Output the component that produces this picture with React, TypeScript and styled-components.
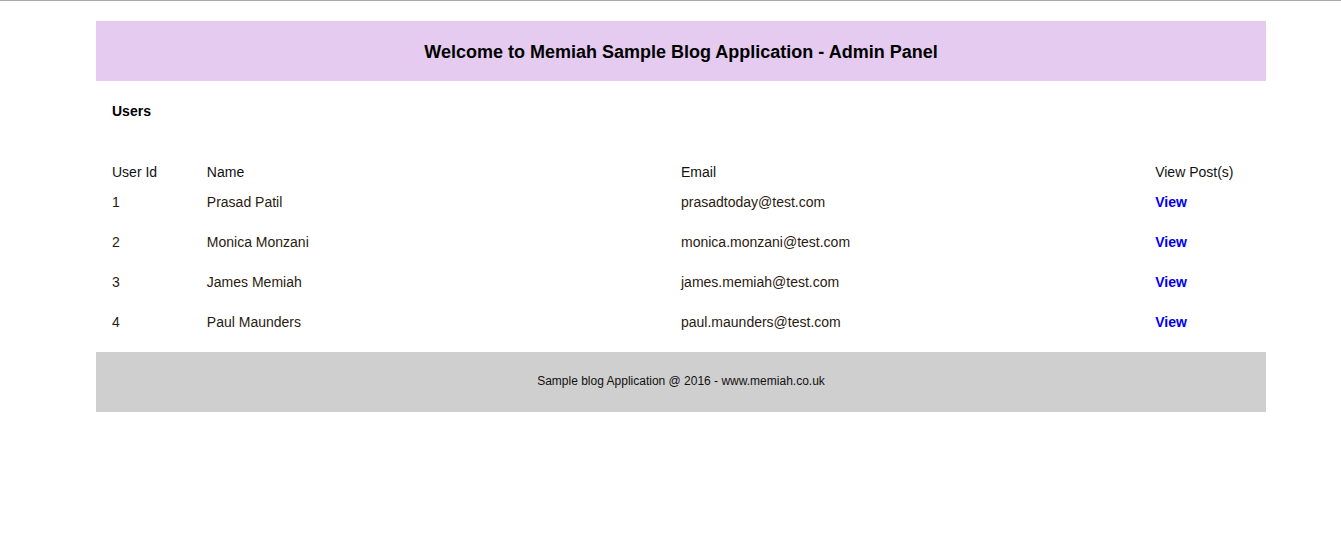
import styled, { createGlobalStyle } from "styled-components"

const users = [
    { id: 1, name: "Prasad Patil", email: "prasadtoday@test.com" },
    { id: 2, name: "Monica Monzani", email: "monica.monzani@test.com" },
    { id: 3, name: "James Memiah", email: "james.memiah@test.com" },
    { id: 4, name: "Paul Maunders", email: "paul.maunders@test.com" },
]

const App = () => {
    return (
        <>
            <GlobalStyle />
            <Page>
                <Container>
                    <Header>
                        <Title>Welcome to Memiah Sample Blog Application - Admin Panel</Title>
                    </Header>
                    <Content>
                        <SectionTitle>Users</SectionTitle>
                        <Table>
                            <HeadRow>
                                <Cell>User Id</Cell>
                                <Cell>Name</Cell>
                                <Cell>Email</Cell>
                                <Cell>View Post(s)</Cell>
                            </HeadRow>
                            {users.map((u) => (
                                <Row key={u.id}>
                                    <Cell>{u.id}</Cell>
                                    <Cell>{u.name}</Cell>
                                    <Cell>{u.email}</Cell>
                                    <Cell><ViewLink href="#">View</ViewLink></Cell>
                                </Row>
                            ))}
                        </Table>
                    </Content>
                    <Footer>Sample blog Application @ 2016 - www.memiah.co.uk</Footer>
                </Container>
            </Page>
        </>
    )
}

export default App

const GlobalStyle = createGlobalStyle`
body{
    margin: 0;
    background-color: #ffffff;
    font-family: "Liberation Sans", Arial, sans-serif;
    color: #222222;
}
`
const Page = styled.div`
width: 100%;
min-height: 548px;
border-top: 1px solid #a9a9a9;
box-sizing: border-box;
padding-top: 20px;
`
const Container = styled.div`
width: 1170px;
margin-left: 96px;
`
const Header = styled.div`
height: 60px;
box-sizing: border-box;
padding-top: 2px;
background-color: #e5cbf0;
display: flex;
justify-content: center;
align-items: center;
`
const Title = styled.h1`
margin: 0;
font-size: 18px;
font-weight: 700;
color: #000000;
`
const Content = styled.div`
padding: 20px 16px 0 16px;
`
const SectionTitle = styled.div`
font-size: 14px;
font-weight: 700;
line-height: 20px;
color: #000000;
margin-bottom: 41px;
`
const Table = styled.div`
display: flex;
flex-direction: column;
`
const HeadRow = styled.div`
display: grid;
grid-template-columns: 1fr 5fr 5fr 1fr;
font-size: 14px;
line-height: 20px;
padding-bottom: 10px;
color: #111111;
`
const Row = styled.div`
display: grid;
grid-template-columns: 1fr 5fr 5fr 1fr;
font-size: 14px;
line-height: 20px;
padding-bottom: 20px;
color: #2a1a10;
`
const Cell = styled.div`
white-space: nowrap;
`
const ViewLink = styled.a`
color: #0000ee;
font-weight: 700;
text-decoration: none;
`
const Footer = styled.div`
height: 60px;
box-sizing: border-box;
padding-bottom: 3px;
background-color: #cfcfcf;
display: flex;
justify-content: center;
align-items: center;
font-size: 12px;
color: #111111;
`
